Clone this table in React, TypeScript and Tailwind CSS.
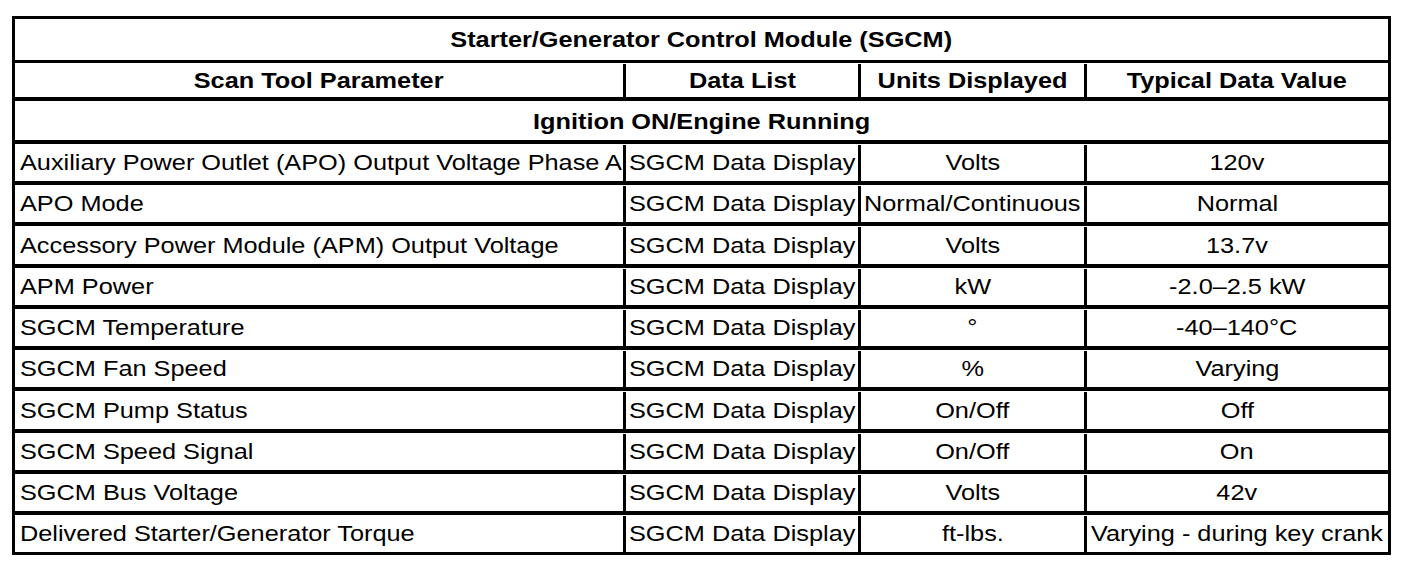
const rows: [string, string, string, string][] = [
  ['Auxiliary Power Outlet (APO) Output Voltage Phase A', 'SGCM Data Display', 'Volts', '120v'],
  ['APO Mode', 'SGCM Data Display', 'Normal/Continuous', 'Normal'],
  ['Accessory Power Module (APM) Output Voltage', 'SGCM Data Display', 'Volts', '13.7v'],
  ['APM Power', 'SGCM Data Display', 'kW', '-2.0–2.5 kW'],
  ['SGCM Temperature', 'SGCM Data Display', '°', '-40–140°C'],
  ['SGCM Fan Speed', 'SGCM Data Display', '%', 'Varying'],
  ['SGCM Pump Status', 'SGCM Data Display', 'On/Off', 'Off'],
  ['SGCM Speed Signal', 'SGCM Data Display', 'On/Off', 'On'],
  ['SGCM Bus Voltage', 'SGCM Data Display', 'Volts', '42v'],
  ['Delivered Starter/Generator Torque', 'SGCM Data Display', 'ft-lbs.', 'Varying - during key crank'],
]

// rows 3 and 7 are a pixel taller in the reference
const rowHeights = ['h-[41px]', 'h-[41px]', 'h-[42px]', 'h-[41px]', 'h-[41px]', 'h-[41px]', 'h-[42px]', 'h-[41px]', 'h-[41px]', 'h-[37px]']

const cols = 'grid grid-cols-[608px_3px_232px_3px_223px_3px_300px]'

// the source text is drawn a bit wider than Arial, so stretch it horizontally
function Wide({ children, left }: { children: React.ReactNode; left?: boolean }) {
  return (
    <span className={`inline-block whitespace-nowrap scale-x-[1.15] ${left ? 'origin-left' : 'origin-center'}`}>
      {children}
    </span>
  )
}

export default function App() {
  return (
    <div className="min-h-[570px] bg-white pl-[12px] pt-[16px] font-['Liberation_Sans',Arial,sans-serif] text-[22px] leading-none text-black">
      <div className="w-[1379px] border-[3px] border-black">
        {/* Title */}
        <div className="flex h-[44px] items-center justify-center border-b-[3px] border-black pt-[1px] font-bold">
          <Wide>Starter/Generator Control Module (SGCM)</Wide>
        </div>

        {/* Column headers */}
        <div className={`${cols} h-[38px] border-b-[4px] border-black pt-[1px] font-bold`}>
          <div className="flex items-center justify-center"><Wide>Scan Tool Parameter</Wide></div>
          <div className="bg-black" />
          <div className="flex items-center justify-center"><Wide>Data List</Wide></div>
          <div className="bg-black" />
          <div className="flex items-center justify-center"><Wide>Units Displayed</Wide></div>
          <div className="bg-black" />
          <div className="flex items-center justify-center"><Wide>Typical Data Value</Wide></div>
        </div>

        {/* Section */}
        <div className="flex h-[43px] items-center justify-center border-b-[4px] border-black pt-[2px] font-bold">
          <Wide>Ignition ON/Engine Running</Wide>
        </div>

        {rows.map((r, i) => (
          <div
            key={i}
            className={`${cols} ${rowHeights[i]} ${i < rows.length - 1 ? 'border-b-[4px] border-black' : ''} pt-[1px]`}
          >
            <div className="flex items-center pl-[5px]"><Wide left>{r[0]}</Wide></div>
            <div className="bg-black" />
            <div className="flex items-center pl-[3px]"><Wide left>{r[1]}</Wide></div>
            <div className="bg-black" />
            <div className="flex items-center justify-center"><Wide>{r[2]}</Wide></div>
            <div className="bg-black" />
            <div className="flex items-center justify-center"><Wide>{r[3]}</Wide></div>
          </div>
        ))}
      </div>
    </div>
  )
}
